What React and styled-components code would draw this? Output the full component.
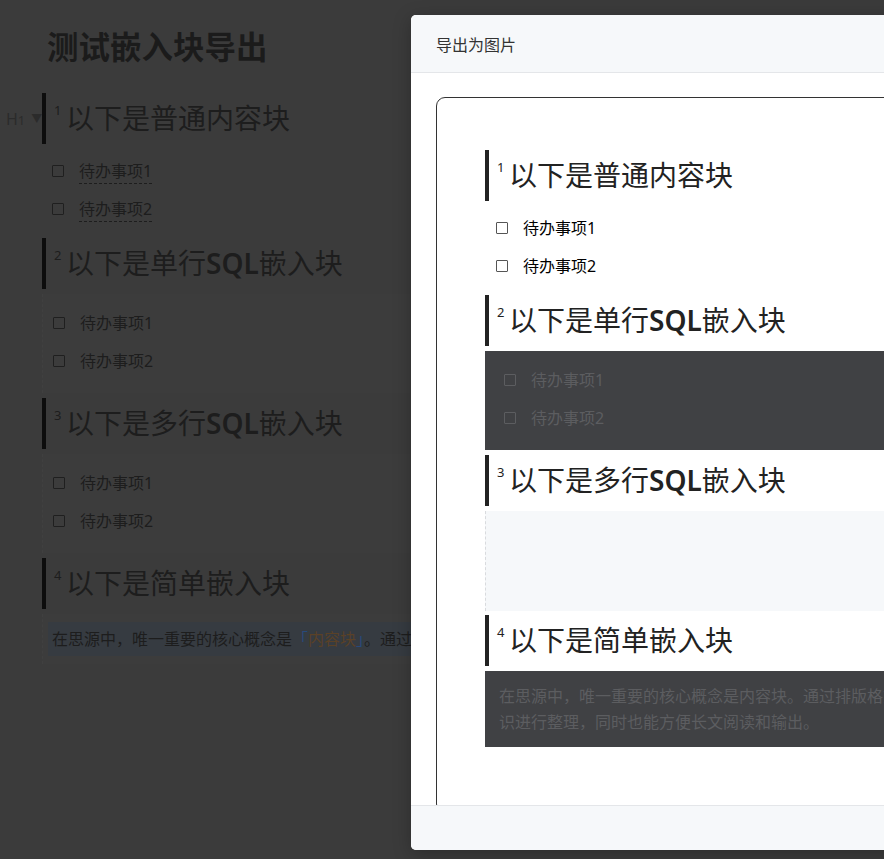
import React from 'react'
import styled, { createGlobalStyle, ThemeProvider } from 'styled-components'

const GlobalStyle = createGlobalStyle`
    html, body {
        margin: 0;
        padding: 0;
        height: 100%;
        overflow: hidden;
        background: #3b3b3b;
    }
    body {
        font-family: "Noto Sans", "Noto Sans CJK SC", sans-serif;
    }
`

// the editor behind the mask, already dimmed
const dimTheme = {
    text: '#1d1d1d',
    headingBorder: '#0d0d0d',
    check: '#1f1f1f',
    todoIndent: '10px',
    embedTodoIndent: '5px',
    embedPadX: '5px',
    embedBg: '#3c3c3c',
    embedBorder: 'rgba(255,255,255,0.025)',
    embedText: '#1d1d1d',
    embedCheck: '#1f1f1f',
}

// the picture inside the export dialog
const previewTheme = {
    text: '#222',
    headingBorder: '#222',
    check: '#555',
    todoIndent: '11px',
    embedTodoIndent: '9px',
    embedPadX: '9px',
    embedBg: '#404144',
    embedBorder: 'transparent',
    embedText: '#5c5d60',
    embedCheck: '#5c5d60',
}

function Todo({ children, blockRef }) {
    return (
        <TodoRow>
            <Check />
            <TodoText $ref={blockRef}>{children}</TodoText>
        </TodoRow>
    )
}

function Title({ n, children, gutter }) {
    return (
        <Heading>
            {gutter && (
                <Gutter>
                    H<small>1</small>
                    <span className="caret">▼</span>
                </Gutter>
            )}
            <Sup>{n}</Sup>
            {children}
        </Heading>
    )
}

function Todos({ inEmbed, blockRef }) {
    return (
        <TodoList $inEmbed={inEmbed}>
            <Todo blockRef={blockRef}>待办事项1</Todo>
            <Todo blockRef={blockRef}>待办事项2</Todo>
        </TodoList>
    )
}

function App() {
    return (
        <Page>
            <GlobalStyle />
            <ThemeProvider theme={dimTheme}>
                <Editor>
                    <DocTitle>测试嵌入块导出</DocTitle>
                    <Title n="1" gutter>以下是普通内容块</Title>
                    <Todos blockRef />
                    <Title n="2">以下是单行<b>SQL</b>嵌入块</Title>
                    <Embed>
                        <Todos inEmbed />
                    </Embed>
                    <Title n="3">以下是多行<b>SQL</b>嵌入块</Title>
                    <Embed>
                        <Todos inEmbed />
                    </Embed>
                    <Title n="4">以下是简单嵌入块</Title>
                    <Embed>
                        <Para $hl>
                            在思源中，唯一重要的核心概念是<Mark>「</Mark><Ref>内容块</Ref><Mark>」</Mark>。通过排版格式将内容块组织在一起
                        </Para>
                    </Embed>
                </Editor>
            </ThemeProvider>

            <Dialog>
                <DialogHeader>导出为图片</DialogHeader>
                <DialogBody>
                    <ThemeProvider theme={previewTheme}>
                        <Preview>
                            <Title n="1">以下是普通内容块</Title>
                            <Todos />
                            <Title n="2">以下是单行<b>SQL</b>嵌入块</Title>
                            <Embed>
                                <Todos inEmbed />
                            </Embed>
                            <Title n="3">以下是多行<b>SQL</b>嵌入块</Title>
                            <EmptyEmbed />
                            <Title n="4">以下是简单嵌入块</Title>
                            <Embed>
                                <Para>
                                    在思源中，唯一重要的核心概念是内容块。通过排版格式将内容块组织在一起，对知识进行整理，同时也能方便长文阅读和输出。
                                </Para>
                            </Embed>
                        </Preview>
                    </ThemeProvider>
                </DialogBody>
                <DialogFooter />
            </Dialog>
        </Page>
    )
}

export default App

const Page = styled.div`
    position: relative;
    width: 884px;
    height: 859px;
    overflow: hidden;
    background: #3b3b3b;
`

const Editor = styled.div`
    width: 760px;
    padding: 25px 0 0 42px;
    color: ${p => p.theme.text};
`

const DocTitle = styled.h1`
    margin: 0 0 24px;
    padding-left: 5px;
    font-size: 31.5px;
    line-height: 44px;
    font-weight: 700;
    color: #1b1b1b;
`

const Heading = styled.h2`
    position: relative;
    margin: 0 0 5px;
    padding: 4px 0 4px 8px;
    border-left: 4px solid ${p => p.theme.headingBorder};
    font-size: 28px;
    line-height: 43px;
    font-weight: 400;
    color: ${p => p.theme.text};
    white-space: nowrap;
    b {
        font-weight: 600;
    }
`

const Sup = styled.span`
    display: inline-block;
    width: 12px;
    font-size: 13px;
    line-height: 13px;
    vertical-align: top;
    margin-top: 7px;
`

const Gutter = styled.span`
    position: absolute;
    left: -40px;
    top: 15px;
    display: flex;
    align-items: center;
    font-size: 16px;
    line-height: 20px;
    color: #2b2b2b;
    small {
        font-size: 13px;
        margin-top: 2px;
    }
    .caret {
        font-size: 11px;
        margin-left: 6px;
    }
`

const TodoList = styled.div`
    padding: ${p => (p.$inEmbed ? `2px 0 5px ${p.theme.embedTodoIndent}` : `3px 0 10px ${p.theme.todoIndent}`)};
`

const TodoRow = styled.div`
    display: flex;
    align-items: center;
    height: 38px;
`

const Check = styled.span`
    width: 12px;
    height: 12px;
    box-sizing: border-box;
    border: 1.5px solid ${p => p.theme.check};
    border-radius: 1px;
    margin-right: 15px;
    flex: none;
`

const TodoText = styled.span`
    font-size: 16px;
    line-height: 24px;
    border-bottom: ${p => (p.$ref ? '1px dashed #1d1d1d' : '1px solid transparent')};
`

const Embed = styled.div`
    margin-bottom: 5px;
    padding: 8px ${p => p.theme.embedPadX};
    background: ${p => p.theme.embedBg};
    border-left: 1px dashed ${p => p.theme.embedBorder};
    color: ${p => p.theme.embedText};
    ${Check} {
        border-color: ${p => p.theme.embedCheck};
    }
`

const EmptyEmbed = styled.div`
    height: 100px;
    margin-bottom: 4px;
    background: #f6f8fa;
    border-left: 1px dashed #d9dbde;
`

const Para = styled.p`
    margin: 0;
    padding: 4px;
    font-size: 16px;
    line-height: 26px;
    background: ${p => (p.$hl ? '#363b41' : 'transparent')};
    ${p => p.$hl && 'white-space: nowrap; overflow: hidden;'}
`

const Mark = styled.span`
    color: #284a7c;
`

const Ref = styled.span`
    color: #5a4127;
`

const Dialog = styled.div`
    position: absolute;
    left: 411px;
    top: 15px;
    width: 776px;
    height: 835px;
    display: flex;
    flex-direction: column;
    background: #fff;
    border-radius: 5px;
    overflow: hidden;
    box-shadow: 0 4px 18px rgba(0, 0, 0, 0.25);
`

const DialogHeader = styled.div`
    flex: none;
    height: 57px;
    padding-left: 25px;
    display: flex;
    align-items: center;
    background: #f6f8fa;
    border-bottom: 1px solid #e4e6e9;
    font-size: 16px;
    color: #333;
`

const DialogBody = styled.div`
    flex: 1;
    min-height: 0;
    overflow: hidden;
    padding: 24px 25px 0;
`

const Preview = styled.div`
    border: 1px solid #333;
    border-radius: 9px;
    padding: 52px 48px 60px;
`

const DialogFooter = styled.div`
    flex: none;
    height: 44px;
    background: #f6f8fa;
    border-top: 1px solid #e4e6e9;
`
